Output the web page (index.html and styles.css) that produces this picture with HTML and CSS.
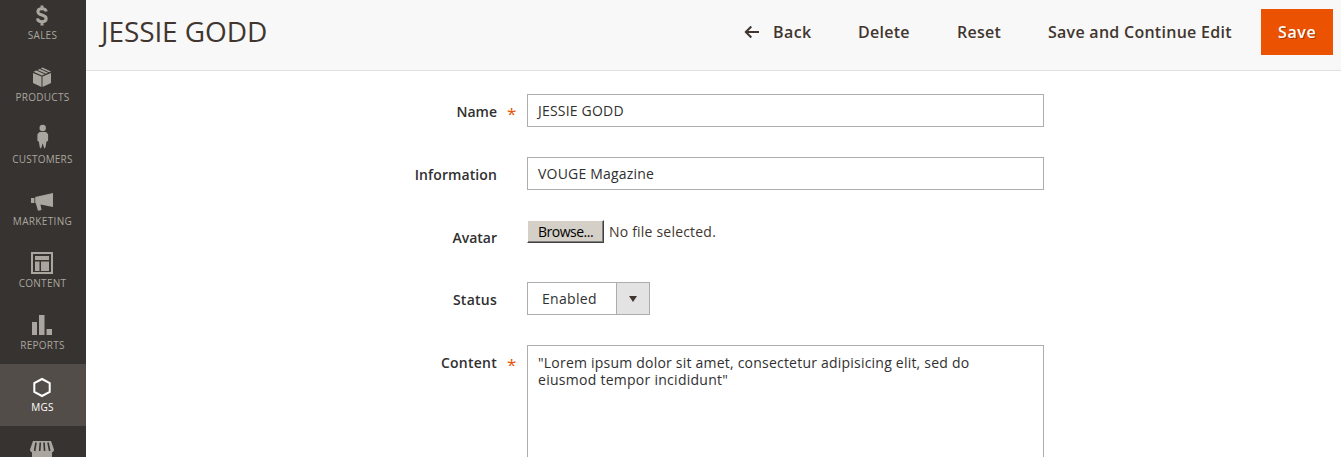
FILE: index.html
```html
<!DOCTYPE html>
<html lang="en">
<head>
<meta charset="utf-8">
<title>JESSIE GODD</title>
<link rel="stylesheet" href="styles.css">
</head>
<body>
<div class="app">
  <nav class="menu">
    <a class="menu-item"><svg class="icon" viewBox="0 0 30 30"><path d="M18.200 11.400C17.900 9.500 16.400 8.800 14 8.800c-2.500 0-4.100 1-4.100 2.900 0 4.300 8.300 2.400 8.300 6.800 0 2.200-1.800 3.300-4.300 3.300-2.700 0-4.200-1.200-4.400-3.400M14 5.500V9M14 21.500v4" fill="none" stroke="currentColor" stroke-width="3"/></svg><span class="menu-label sales">SALES</span></a>
    <a class="menu-item"><svg class="icon" viewBox="0 0 30 30"><path d="M5 11l8.500 3.500V25L5 21zM14.500 14.500L23 11v10l-8.500 4zM5.500 9.800l2.900-1.300 8.300 3.700-2.700 1.200zM9.600 8l2.100-1 8.300 3.700-2.100 1zM12.800 6.400L14.500 5.500 23 9.600l-1.800.7z" fill="currentColor"/></svg><span class="menu-label products">PRODUCTS</span></a>
    <a class="menu-item"><svg class="icon" viewBox="0 0 30 30"><circle cx="14.700" cy="4" r="3.200" fill="currentColor"/><path d="M11.500 8h6.500l2.100 2.200v6.600l-1.700 1-.8 5.200-1.300 1.800-1.600-5.600-1.700 5.600-1.300-1.800-.8-5.200-1.500-1v-6.600z" fill="currentColor"/></svg><span class="menu-label customers">CUSTOMERS</span></a>
    <a class="menu-item"><svg class="icon" viewBox="0 0 30 30"><path d="M3 12h3.400v5H3zM7.200 11L25 7v14l-12.500-2.600 1 5.600-3.500.8-2.200-7.500-.6-.2z" fill="currentColor"/></svg><span class="menu-label marketing">MARKETING</span></a>
    <a class="menu-item"><svg class="icon" viewBox="0 0 30 30"><path d="M4 5h20v20H4z" fill="none" stroke="currentColor" stroke-width="2"/><path d="M7 8h14v4H7zM7 13.500h4.500V23H7zM13 13.500h8V23h-8z" fill="currentColor"/></svg><span class="menu-label content">CONTENT</span></a>
    <a class="menu-item"><svg class="icon" viewBox="0 0 30 30"><path d="M4 12h5v13H4zM11 5h5.500v20H11zM18.500 19h5.500v6h-5.500z" fill="currentColor"/></svg><span class="menu-label reports">REPORTS</span></a>
    <a class="menu-item active"><svg class="icon" viewBox="0 0 30 30"><path d="M14 7l7.700 4.200v8.600L14 24l-7.700-4.200v-8.600z" fill="none" stroke="currentColor" stroke-width="2"/></svg><span class="menu-label mgs">MGS</span></a>
    <a class="menu-item"><svg class="icon" viewBox="0 0 30 30"><path d="M5 7h18l3 8.500c0 1.600-.7 2.500-2 2.700V25H4v-6.800c-1.300-.2-2-1.100-2-2.700z" fill="currentColor"/><path d="M8 8.500L6.600 17M12.300 8.500l-.6 8.500M16 8.500l.6 8.500M20 8.500l1.700 8.500" stroke="#373330" stroke-width="1.600" fill="none"/></svg></a>
  </nav>
  <main class="page">
    <header class="page-header">
      <h1 class="title">JESSIE GODD</h1>
      <div class="actions">
        <button class="action back"><svg class="arrow" viewBox="0 0 16 14"><path d="M15 7H2M7.300 1.500L1.800 7l5.500 5.500" fill="none" stroke="currentColor" stroke-width="2"/></svg><span>Back</span></button>
        <button class="action delete">Delete</button>
        <button class="action reset">Reset</button>
        <button class="action continue">Save and Continue Edit</button>
        <button class="action save">Save</button>
      </div>
    </header>
    <form class="form">
      <div class="field"><div class="label required"><span>Name</span></div><div class="box"><span>JESSIE GODD</span></div></div>
      <div class="field"><div class="label"><span class="info-label">Information</span></div><div class="box"><span>VOUGE Magazine</span></div></div>
      <div class="field avatar"><div class="label"><span>Avatar</span></div><div class="file"><span class="browse">Browse...</span><span class="file-note">No file selected.</span></div></div>
      <div class="field status"><div class="label"><span class="wide-label">Status</span></div><div class="select"><span class="select-value">Enabled</span><span class="toggle"><i class="caret"></i></span></div></div>
      <div class="field content-field"><div class="label required"><span class="wide-label">Content</span></div><div class="box textarea"><span class="line-one">"Lorem ipsum dolor sit amet, consectetur adipisicing elit, sed do</span><br><span class="line-two">eiusmod tempor incididunt"</span></div></div>
    </form>
  </main>
</div>
</body>
</html>
```
FILE: styles.css
```css
* { box-sizing: border-box; }
body { margin: 0; background: #fff; font-family: "Open Sans", "Noto Sans", sans-serif; color: #303030; }
.app { display: flex; height: 457px; overflow: hidden; }
.menu { width: 86px; flex: none; background: #373330; color: #aaa69f; display: flex; flex-direction: column; overflow: hidden; }
.menu-item { height: 62px; flex: none; display: flex; flex-direction: column; align-items: center; padding-top: 8px; }
.menu-item:first-child { margin-top: -8px; }
.menu-item.active { background: #524d49; color: #fff; }
.icon { width: 30px; height: 30px; flex: none; }
.menu-label { font-size: 10px; line-height: 10px; white-space: nowrap; letter-spacing: .25px; margin-left: -1px; }
.customers { letter-spacing: .2px; }
.marketing { letter-spacing: .35px; }
.page { flex: 1; }
.page-header { height: 71px; background: #f8f8f8; border-bottom: 1px solid #e0e0e0; display: flex; justify-content: space-between; padding: 9px 8px 0 15px; }
.title { margin: 0; font-size: 28px; line-height: 44px; font-weight: 400; color: #41362f; white-space: nowrap; letter-spacing: -.1px; }
.actions { display: flex; height: 46px; }
.action { border: 0; background: none; padding: 0; font: 600 16px/46px "Open Sans", "Noto Sans", sans-serif; color: #41362f; letter-spacing: .27px; white-space: nowrap; text-align: left; display: flex; align-items: center; }
.arrow { width: 16px; height: 14px; margin-right: 13px; }
.back { width: 114px; letter-spacing: .4px; }
.delete { width: 99px; }
.reset { width: 91px; }
.continue { width: 213px; }
.save { width: 72px; background: #eb5202; color: #fff; padding-left: 17px; text-shadow: 1px 1px 0 rgba(0, 0, 0, .3); letter-spacing: .6px; }
.form { padding-top: 23px; font-size: 14px; }
.field { display: flex; height: 63px; }
.label { width: 411px; margin-right: 30px; padding-top: 8px; line-height: 20px; font-weight: 600; text-align: right; flex: none; position: relative; }
.info-label { letter-spacing: .1px; }
.wide-label { letter-spacing: .25px; }
.required::after { content: "*"; position: absolute; left: 421px; top: 10px; color: #eb5202; font-weight: 400; font-size: 17px; }
.box { width: 517px; height: 33px; border: 1px solid #adadad; padding: 7px 10px; line-height: 18px; white-space: nowrap; letter-spacing: .2px; }
.avatar { height: 62px; }
.file { display: flex; align-items: flex-start; }
.browse { width: 77px; height: 23px; background: #d4d0c8; border: 1px solid #fff; border-color: #fff #404040 #404040 #fff; box-shadow: inset -1px -1px 0 #808080; color: #000; line-height: 22px; padding-left: 10px; letter-spacing: -.5px; }
.file-note { margin-left: 5px; line-height: 23px; color: #41362f; letter-spacing: .2px; }
.select { width: 123px; height: 33px; border: 1px solid #adadad; display: flex; line-height: 31px; }
.select-value { width: 88px; padding-left: 14px; letter-spacing: .3px; }
.toggle { flex: 1; border-left: 1px solid #adadad; background: #e3e3e3; display: flex; align-items: center; justify-content: center; }
.caret { border: 4.5px solid transparent; border-top: 6px solid #41362f; border-bottom: 0; }
.content-field { height: auto; }
.textarea { height: 130px; padding-top: 8px; line-height: 17px; letter-spacing: .215px; }
.line-two { letter-spacing: .27px; }
```
